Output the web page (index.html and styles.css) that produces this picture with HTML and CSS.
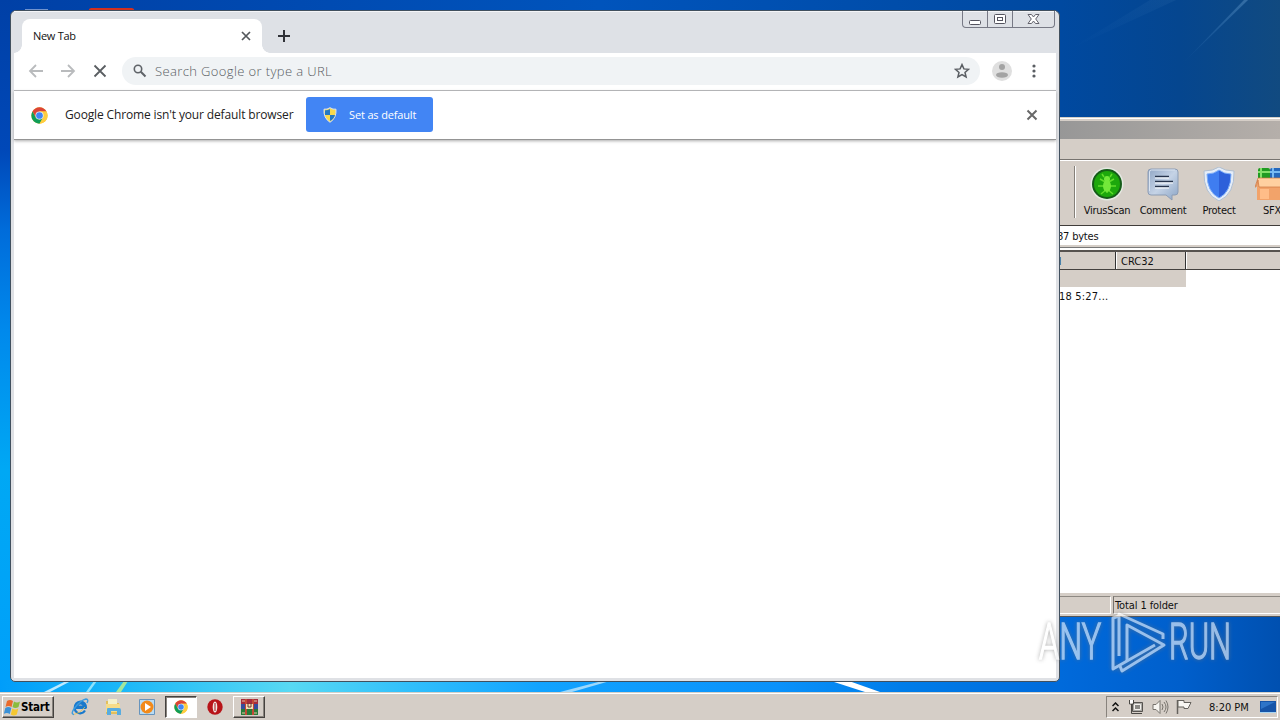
FILE: index.html
```html
<!DOCTYPE html>
<html lang="en">
<head>
    <meta charset="UTF-8">
    <title>New Tab</title>
    <link rel="stylesheet" href="styles.css">
</head>
<body>
    <svg width="0" height="0" class="defs">
        <symbol id="chrome" viewBox="0 0 48 48">
            <circle cx="24" cy="24" r="23" fill="#fc3"/>
            <path d="M24 24L14 30 4.100 12.500A23 23 0 0 1 43.900 12.500H24z" fill="#db4437"/>
            <path d="M4.100 12.500A23 23 0 0 0 24 47L34 30 24 35 14 30z" fill="#0f9d58"/>
            <path d="M43.900 12.500H24L34 30 24 47A23 23 0 0 0 43.900 12.500z" fill="#ffcd40"/>
            <circle cx="24" cy="24" r="11.500" fill="#f1f1f1"/>
            <circle cx="24" cy="24" r="9.500" fill="#4285f4"/>
        </symbol>
    </svg>

    <div class="desktop">
        <svg class="wallpaper" width="1280" height="692">
            <defs>
                <linearGradient id="ray" x1="0" y1="1" x2="1" y2="0"><stop offset="0" stop-color="#4a8fd0" stop-opacity="0"/><stop offset="1" stop-color="#5b92c4" stop-opacity=".5"/></linearGradient>
            </defs>
            <path d="M1182 64L1244 0h4z" fill="url(#ray)"/>
            <path d="M1068 50L1150 0h26z" fill="url(#ray)" opacity=".2"/>
            <path d="M44 692L66 681h5L50 692z" fill="#bdeaff"/>
            <path d="M86 692l8-11h3l-8 11z" fill="#8fe2fb"/>
            <path d="M116 692l8-11h4l-7 11z" fill="#a5e79c"/>
            <path d="M560 692l42-11h8l-38 11z" fill="#9cd8fc"/>
            <path d="M831 681h18l31 11h-15z" fill="#fff"/>
            <path d="M89 11V9l2-1h41l2 1v2z" fill="#d3301f"/>
            <path d="M25 9.500h23" stroke="#7193ce"/>
        </svg>

        <div class="rar-window">
            <div class="rar-title"></div>
            <div class="rar-menu"></div>
            <div class="rar-toolbar">
                <div class="separator"></div>
                <div class="tool">
                    <svg width="34" height="34" viewBox="0 0 34 34">
                        <circle cx="17" cy="17" r="16.500" fill="#e5e9e2"/>
                        <circle cx="17" cy="17" r="15" fill="#155c18"/>
                        <circle cx="17" cy="17" r="13" fill="#1da80c"/>
                        <path d="M17 12v14M17 16l-7-4M17 16l7-4M17 19H8M17 19h9M17 22l-6 5M17 22l6 5M14 10l-2-3M20 10l2-3" stroke="#62dd2c" stroke-width="1.500"/>
                        <ellipse cx="17" cy="19" rx="4" ry="6" fill="#73e83a"/><circle cx="17" cy="12" r="3" fill="#73e83a"/>
                    </svg>
                    <span>VirusScan</span>
                </div>
                <div class="tool">
                    <svg width="34" height="34" viewBox="0 0 34 34">
                        <defs><linearGradient id="bubble" x2="1" y2="1"><stop stop-color="#8fa5c4"/><stop offset=".5" stop-color="#c5d3e6"/><stop offset="1" stop-color="#8ba4c5"/></linearGradient></defs>
                        <path d="M5 2h24q3 0 3 3v20q0 3-3 3h-3v5l-6-5H5q-3 0-3-3V5q0-3 3-3z" fill="url(#bubble)" stroke="#8c9cb4"/>
                        <path d="M3.500 24V5q0-2 2-2H29" fill="none" stroke="#d9e3f0"/>
                        <path d="M9 9.500h14M9 14.500h18M9 19.500h14" stroke="#27344c" stroke-width="1.500"/>
                        <path d="M9 11h14M9 16h18M9 21h14" stroke="#fff"/>
                    </svg>
                    <span>Comment</span>
                </div>
                <div class="tool">
                    <svg width="34" height="34" viewBox="0 0 34 34">
                        <path d="M17 0q6 4 15 4 1 23-15 30Q1 27 2 4q9 0 15-4z" fill="#e5edf8" stroke="#b0bfd1"/>
                        <path d="M17 3q5 4 12 4 0 18-12 24Q5 25 5 7q7 0 12-4z" fill="#3f7df0"/>
                        <path d="M17 3q5 4 12 4 0 18-12 24z" fill="#2d60da"/>
                        <path d="M17 3q5 4 12 4 0 18-12 24Q5 25 5 7q7 0 12-4z" fill="none" stroke="#7eadf7"/>
                    </svg>
                    <span>Protect</span>
                </div>
                <div class="tool">
                    <svg width="34" height="34" viewBox="0 0 34 34">
                        <rect x="3" y="1" width="12" height="12" rx="2" fill="#209b22"/><path d="M6 1v11M3 5h12" stroke="#82df68" stroke-width="2"/>
                        <rect x="15" y="1" width="12" height="12" rx="2" fill="#2568bc"/><path d="M18 1v11M15 5h12" stroke="#77b9f3" stroke-width="2"/>
                        <path d="M2 13h30v20H2z" fill="#f2a36a"/><path d="M3 11h28l3 9H4l-1-7-2 7H0z" fill="#ffd0a0" stroke="#cd7641" stroke-width=".7"/>
                        <path d="M5 22h9v10H5z" fill="#ffbd88"/>
                    </svg>
                    <span>SFX</span>
                </div>
            </div>
            <div class="rar-path"><span>87 bytes</span></div>
            <div class="rar-gap"></div>
            <div class="rar-header"><div class="col-date">d</div><div class="col-crc">CRC32</div><div class="col-rest"></div></div>
            <div class="rar-list">
                <div class="selected-row"></div>
                <div class="file-row"><span>18 5:27...</span></div>
            </div>
            <div class="rar-status"><div class="status-left"></div><div class="status-right">Total 1 folder</div></div>
        </div>

        <div class="browser">
            <div class="tab-strip">
                <div class="tab">
                    <span class="tab-title">New Tab</span>
                    <svg width="10" height="10" viewBox="0 0 10 10"><path d="M1 1l8 8M9 1L1 9" stroke="#54585c" stroke-width="1.700"/></svg>
                </div>
                <svg class="new-tab" width="12" height="12" viewBox="0 0 12 12"><path d="M6 0v12M0 6h12" stroke="#303238" stroke-width="2"/></svg>
                <div class="window-buttons">
                    <div><svg width="13" height="13" viewBox="0 0 13 13"><rect x=".5" y="6.500" width="11" height="4" rx="1" fill="#fff" stroke="#54545f"/></svg></div>
                    <div><svg width="13" height="13" viewBox="0 0 13 13"><rect x=".5" y=".5" width="11" height="9" rx="1" fill="#fff" stroke="#54545f"/><rect x="3.500" y="3.500" width="5" height="3" fill="#fff" stroke="#54545f"/></svg></div>
                    <div><svg width="13" height="13" viewBox="0 0 13 13"><path d="M1 .5h3.500l2 2.500 2-2.500H12L8.700 5 12 9.500H8.500L6.500 7l-2 2.500H1L4.300 5z" fill="#fff" stroke="#62626c"/></svg></div>
                </div>
            </div>
            <div class="toolbar">
                <svg width="16" height="16" viewBox="0 0 16 16"><path d="M15 8H2M8 2L2 8l6 6" fill="none" stroke="#b9bbbd" stroke-width="1.800"/></svg>
                <svg width="16" height="16" viewBox="0 0 16 16"><path d="M1 8h13M8 2l6 6-6 6" fill="none" stroke="#b9bbbd" stroke-width="1.800"/></svg>
                <svg width="16" height="16" viewBox="0 0 16 16"><path d="M2.500 2.500l11 11M13.500 2.500l-11 11" stroke="#5a5e62" stroke-width="1.800"/></svg>
                <div class="omnibox">
                    <svg width="14" height="14" viewBox="0 0 14 14"><circle cx="5" cy="5" r="3.700" fill="none" stroke="#5f6368" stroke-width="1.600"/><path d="M7.800 7.800l4.700 4.700" stroke="#5f6368" stroke-width="2"/></svg>
                    <span>Search Google or type a URL</span>
                    <svg class="star" width="16" height="16" viewBox="0 0 16 16"><path d="M8 1.600l1.900 4.300 4.600.4-3.500 3.100 1.100 4.600L8 11.600 3.900 14 5 9.400 1.500 6.300l4.600-.4z" fill="none" stroke="#5a5e63" stroke-width="1.500"/></svg>
                </div>
                <svg class="avatar" width="20" height="20" viewBox="0 0 20 20"><circle cx="10" cy="10" r="10" fill="#dfdfdf"/><circle cx="10" cy="6" r="3" fill="#a3a3a3"/><ellipse cx="10" cy="14" rx="6" ry="2.700" fill="#a3a3a3"/></svg>
                <svg class="dots" width="4" height="14" viewBox="0 0 4 14"><circle cx="2" cy="2" r="1.600" fill="#5a5e63"/><circle cx="2" cy="7" r="1.600" fill="#5a5e63"/><circle cx="2" cy="12" r="1.600" fill="#5a5e63"/></svg>
            </div>
            <div class="infobar">
                <svg class="info-icon" width="17" height="17"><use href="#chrome"/></svg>
                <span class="info-text">Google Chrome isn't your default browser</span>
                <button class="default-button">
                    <svg width="14" height="16" viewBox="0 0 14 16"><path d="M7 .7q3 2 6 1.500Q13.700 11 7 15.300.3 11 1 2.200 4 2.700 7 .7z" fill="#f7d94c" stroke="#dce4ec"/><path d="M7 2v6H2V3.200Q4.500 3.500 7 2zM7 8h5q-1 4-5 6z" fill="#2378c4"/></svg>
                    <span>Set as default</span>
                </button>
                <svg class="info-close" width="12" height="12" viewBox="0 0 12 12"><path d="M1.500 1.500l9 9M10.500 1.500l-9 9" stroke="#686868" stroke-width="2"/></svg>
            </div>
            <div class="page"></div>
        </div>

        <svg class="watermark" width="220" height="76" viewBox="0 0 220 76">
            <text x="4" y="49" textLength="62" lengthAdjust="spacingAndGlyphs">ANY</text>
            <text x="134" y="49" textLength="62" lengthAdjust="spacingAndGlyphs">RUN</text>
            <g fill="none" stroke="#fff" stroke-width="3" stroke-linejoin="round">
                <path d="M84 6l-6 2v51l42-24"/>
                <path d="M84 46V4l44 20v5"/>
                <path d="M85 56l2 5 42-26-37-20v36"/>
            </g>
        </svg>
    </div>

    <div class="taskbar">
        <button class="start">
            <svg width="17" height="17" viewBox="0 0 17 17"><path d="M3 2q3-2 6 0L7.500 8Q4.500 6 1.500 8z" fill="#e96a2b"/><path d="M10 2.500q3 2 6 0L14.500 8q-3 2-6 0z" fill="#8abc3d"/><path d="M1.300 9q3-2 6 0l-1.500 6q-3-2-6 0z" fill="#3b91d6"/><path d="M8.300 9.500q3 2 6 0l-1.500 6q-3 2-6 0z" fill="#f5c730"/></svg>
            <span>Start</span>
        </button>
        <div class="task ie"><svg width="18" height="18" viewBox="0 0 18 18"><path d="M13 8.500H6Q6.500 5.500 9.500 5.500T13 8.500zM5 10h10.500M14 12.500Q12 15.500 9 15.300 4 15 3.700 10 4 4 9.500 3.500 15 4 15 10" fill="none" stroke="#1979cc" stroke-width="2.200"/><path d="M3 16.500Q-1 16 4 9.500 10 2 15 1q3 .2 1 4" fill="none" stroke="#3a9be0" stroke-width="1.400"/><path d="M3 16.500Q9 15.500 14 9" fill="none" stroke="#e8c44c" stroke-width=".8"/></svg></div>
        <div class="task folder"><svg width="18" height="18" viewBox="0 0 18 18"><path d="M2 3h6l1 2h6v11H2z" fill="#e3bf5c"/><path d="M4 1h9v5H4z" fill="#f4f1cb"/><path d="M2 6h14v8H2z" fill="#f6dc88"/><path d="M3 17v-6q0-1 1-1h11q2 0 2 2v5h-4v-4H7v4z" fill="#58ace0"/></svg></div>
        <div class="task media"><svg width="18" height="18" viewBox="0 0 18 18"><path d="M1.500 1.500h15v15h-15z" fill="#b9dcf4" stroke="#6794bd"/><circle cx="9" cy="9" r="6.500" fill="#f28a1a"/><path d="M7 5l6 4-6 4z" fill="#fff"/></svg></div>
        <div class="task active"><svg width="14" height="14"><use href="#chrome"/></svg></div>
        <div class="task opera"><svg width="16" height="16" viewBox="0 0 16 16"><circle cx="8" cy="8" r="7.700" fill="#b81419"/><ellipse cx="8" cy="8" rx="2.300" ry="5.500" fill="#f2e8e4"/><path d="M8 4v8" stroke="#a11519" stroke-width="1"/></svg></div>
        <div class="task raised"><svg width="17" height="16" viewBox="0 0 17 16"><path d="M0 0h17v5H0z" fill="#a52c3c"/><path d="M0 5h17v5H0z" fill="#354d9c"/><path d="M0 10h17v6H0z" fill="#277b38"/><path d="M4 0h2v16H4zM11 0h2v16h-2z" fill="#c34835"/><path d="M5 5h7v5H5z" fill="#f2dfb6"/><path d="M7 4v4h3V4" fill="none" stroke="#6b3c30"/><path d="M1 2h3M13 2h3M1 14h3M13 14h3" stroke="#e5c7a1"/></svg></div>
        <div class="tray">
            <svg class="chevrons" width="7" height="10" viewBox="0 0 7 10"><path d="M.5 4l3-3 3 3M.5 9l3-3 3 3" fill="none" stroke="#111" stroke-width="1.500"/></svg>
            <svg class="network" width="16" height="16" viewBox="0 0 16 16"><path d="M4.500 3.500h10v9h-10z" fill="#aaa9a5" stroke="#56534f"/><path d="M6.500 5.500h6v5h-6z" fill="#8b8a86" stroke="#f4f2ee"/><path d="M1.500 1v4h4V1M3.500 5v9.500H14" fill="none" stroke="#4a4844"/><path d="M2 1h3v3.500H2z" fill="#fff"/></svg>
            <svg class="speaker" width="17" height="16" viewBox="0 0 17 16"><path d="M1 5.500h3L8 1.500v13l-4-4H1z" fill="#f7f5f1" stroke="#77736d"/><path d="M10 5q2 3 0 6M12 3q4 5 0 10M14 1.500q4 6.500 0 13" fill="none" stroke="#77736d"/></svg>
            <svg class="flag" width="17" height="16" viewBox="0 0 17 16"><path d="M1.500 1v14" stroke="#65625d" stroke-width="1.500"/><path d="M2 1.500h6v2h7l-3 6H8V8H2z" fill="#f8f6f2" stroke="#65625d"/></svg>
            <span>8:20 PM</span>
            <svg class="show-desktop" width="16" height="14" viewBox="0 0 16 14"><path d="M0 1h16v11H0z" fill="#1554a8"/><path d="M1 2h14L1 9z" fill="#2d74c8"/><path d="M0 12.500h16" stroke="#a7d4f2"/></svg>
        </div>
    </div>
</body>
</html>
```

FILE: styles.css
```css
* {
    box-sizing: border-box;
}
body {
    margin: 0;
    width: 1280px;
    height: 720px;
    overflow: hidden;
    font-family: "DejaVu Sans Condensed", "DejaVu Sans", sans-serif;
    font-stretch: condensed;
    font-size: 11px;
    color: #111;
}
svg {
    display: block;
    flex: none;
}
.defs {
    position: absolute;
}
button {
    font: inherit;
    padding: 0;
    border: 0;
}
.desktop {
    position: relative;
    height: 692px;
    background:
        linear-gradient(#0040a6 0, #0048b8 150px, #006cda 230px, #0089ec 330px, #00a8f4 470px, #00a0fa 680px) 0 0 / 12px 680px no-repeat,
        linear-gradient(90deg, #009dfa 0, #18b5f8 110px, #58d9f3 290px, #31bffb 410px, #12a3ff 540px, #0a91fa 780px, #007de9 900px, #0069da 1070px, #005fcc 1180px, #0050b0 1280px) 0 100% / 100% 80px no-repeat,
        linear-gradient(90deg, #0040a6 0, #0054bc 600px, #0049a0 1060px, #05468f 1180px, #114a80 1280px);
}
.wallpaper {
    position: absolute;
}

/* archive window */
.rar-window {
    position: absolute;
    left: 1050px;
    top: 117px;
    width: 230px;
    height: 500px;
    overflow: hidden;
    background: #d5cec7;
    border-top: 1px solid #d4d0c8;
    border-bottom: 1px solid #555;
    box-shadow: inset 0 1px #fff;
}
.rar-title {
    height: 18px;
    margin-top: 3px;
    background: linear-gradient(90deg, #969696, #b5afaa);
}
.rar-menu {
    height: 21px;
    border-bottom: 1px solid #77736f;
}
.rar-toolbar {
    display: flex;
    height: 65px;
    border-top: 1px solid #fff;
    padding: 5px 0 0 24px;
}
.separator {
    flex: none;
    width: 2px;
    height: 52px;
    margin-right: 3px;
    border-left: 1px solid #858079;
    border-right: 1px solid #fff;
}
.tool {
    flex: none;
    width: 56px;
    display: flex;
    flex-direction: column;
    align-items: center;
    line-height: 14px;
    margin-top: 1px;
}
.tool:last-child {
    width: 50px;
}
.tool span {
    margin-top: 3px;
    letter-spacing: -.25px;
}
.rar-path {
    height: 20px;
    border-top: 1px solid #403d3a;
    background: #fff;
    padding-left: 7px;
    line-height: 21px;
    letter-spacing: -.2px;
}
.rar-gap {
    height: 7px;
    border-bottom: 2px solid #57534f;
    background: linear-gradient(#d5cec7 2px, #777 2px, #777 3px, #fff 3px);
}
.rar-header {
    display: flex;
    height: 18px;
    line-height: 19px;
    border-bottom: 1px solid #45423f;
}
.col-date {
    width: 66px;
    padding-left: 5px;
    border-right: 1px solid #333;
}
.col-crc {
    width: 70px;
    padding-left: 4px;
    border-left: 1px solid #fff;
    border-right: 1px solid #333;
}
.col-rest {
    border-left: 1px solid #fff;
}
.rar-list {
    height: 322px;
    background: #fff;
}
.selected-row {
    width: 136px;
    height: 17px;
    background: #d5cec7;
}
.file-row {
    padding-left: 9px;
    line-height: 19px;
    letter-spacing: .2px;
}
.rar-status {
    display: flex;
    height: 24px;
    padding: 4px 0 2px;
    line-height: 17px;
    box-shadow: inset 0 1px #fff;
}
.status-left {
    width: 61px;
    border-top: 1px solid #8e8983;
    border-right: 1px solid #fff;
    border-bottom: 1px solid #fff;
    margin-right: 2px;
}
.status-right {
    flex: 1;
    border-top: 1px solid #8e8983;
    border-left: 1px solid #77736f;
    border-bottom: 1px solid #fff;
    padding-left: 1px;
    letter-spacing: -.1px;
}

/* browser window */
.browser {
    position: absolute;
    left: 10px;
    top: 10px;
    width: 1050px;
    height: 672px;
    padding: 0 3px 3px;
    background: #dfe1e5;
    border: 1px solid #41505e;
    border-radius: 6px 6px 5px 5px;
    font-family: "Open Sans", sans-serif;
    font-stretch: normal;
}
.tab-strip {
    display: flex;
    height: 42px;
    background: #dee1e6;
    border-top: 1px solid #f4f5f8;
    padding: 7px 0 0 8px;
}
.tab {
    position: relative;
    display: flex;
    align-items: center;
    justify-content: space-between;
    width: 240px;
    height: 34px;
    padding: 0 11px;
    background: #fff;
    border-radius: 8px 8px 0 0;
}
.tab::before,
.tab::after {
    content: "";
    position: absolute;
    bottom: 0;
    width: 8px;
    height: 8px;
}
.tab::before {
    left: -8px;
    background: radial-gradient(circle at 0 0, transparent 7.5px, #fff 8px);
}
.tab::after {
    right: -8px;
    background: radial-gradient(circle at 100% 0, transparent 7.5px, #fff 8px);
}
.tab-title {
    margin-bottom: 2px;
    letter-spacing: -.3px;
}
.new-tab {
    margin: 11px 0 0 16px;
}
.window-buttons {
    display: flex;
    height: 17px;
    margin: -8px 1px 0 auto;
    border: 1px solid #777985;
    border-top: 0;
    border-radius: 0 0 4px 4px;
}
.window-buttons div {
    display: flex;
    justify-content: center;
    align-items: center;
    width: 25px;
    padding-top: 2px;
    border-right: 1px solid #777985;
}
.window-buttons div:last-child {
    width: 41px;
    border: 0;
}
.toolbar {
    display: flex;
    align-items: center;
    gap: 16px;
    height: 38px;
    padding: 0 20px 1px 14px;
    background: #fff;
    border-bottom: 1px solid #b5b6b8;
}
.omnibox {
    flex: 1;
    display: flex;
    align-items: center;
    height: 28px;
    margin-left: -2px;
    padding: 0 10px 0 11px;
    border-radius: 14px;
    background: #f0f3f5;
    font-size: 13px;
    font-weight: 300;
    color: #585c62;
}
.omnibox span {
    margin: 0 0 1px 8px;
    letter-spacing: .38px;
}
.star {
    margin-left: auto;
}
.avatar {
    margin-left: -4px;
}
.dots {
    margin-left: 4px;
}
.infobar {
    position: relative;
    display: flex;
    align-items: center;
    height: 49px;
    padding: 0 18px 0 17px;
    background: #fff;
    border-bottom: 1px solid #949494;
    box-shadow: 0 1px 3px #aaa;
}
.info-text {
    width: 241px;
    margin: 0 0 2px 17px;
    font-size: 12px;
    letter-spacing: -.14px;
    color: #222;
    white-space: nowrap;
}
.default-button {
    display: flex;
    align-items: center;
    width: 127px;
    height: 35px;
    margin-top: -1px;
    padding-left: 17px;
    border-radius: 3px;
    background: #4285f4;
    color: #fff;
}
.default-button span {
    margin: 0 0 1px 12px;
    letter-spacing: -.15px;
}
.info-close {
    margin-left: auto;
}
.page {
    height: 538px;
    background: #fff;
}

.watermark {
    position: absolute;
    left: 1035px;
    top: 610px;
    opacity: .6;
    filter: drop-shadow(0 0 2px #777);
}
.watermark text {
    font: 300 50px Roboto, sans-serif;
    fill: #fff;
    stroke: #fff;
    stroke-width: 1.5px;
}

/* taskbar */
.taskbar {
    display: flex;
    align-items: center;
    height: 28px;
    padding: 1px 2px 0;
    background: #d5cec7;
    border-top: 1px solid #d4d0c8;
    box-shadow: inset 0 1px #fff;
}
.start,
.raised {
    border: 1px solid;
    border-color: #fff #45423f #45423f #fff;
    box-shadow: inset -1px -1px #88837d;
    background: #d5cec7;
}
.start {
    display: flex;
    align-items: center;
    width: 52px;
    height: 22px;
    padding-left: 1px;
    font-size: 11.5px;
    font-weight: bold;
    letter-spacing: -.2px;
}
.task {
    display: flex;
    align-items: center;
    justify-content: center;
    width: 32px;
    height: 22px;
}
.ie {
    margin-left: 10px;
}
.folder {
    margin-left: 1px;
}
.media {
    margin-left: 2px;
}
.active {
    margin-left: 2px;
    border: 1px solid;
    border-color: #45423f #fff #fff #45423f;
    box-shadow: inset 1px 1px #88837d;
    background: #fff;
}
.opera {
    margin-left: 2px;
}
.raised {
    margin-left: 2px;
}
.tray {
    display: flex;
    align-items: center;
    width: 172px;
    height: 22px;
    margin-left: auto;
    padding-left: 5px;
    border: 1px solid;
    border-color: #88837d #fff #fff #88837d;
}
.network {
    margin-left: 9px;
}
.speaker {
    margin-left: 8px;
}
.flag {
    margin-left: 7px;
}
.tray span {
    margin-left: 16px;
    white-space: nowrap;
}
.show-desktop {
    margin: 0 1px 0 auto;
}
```
